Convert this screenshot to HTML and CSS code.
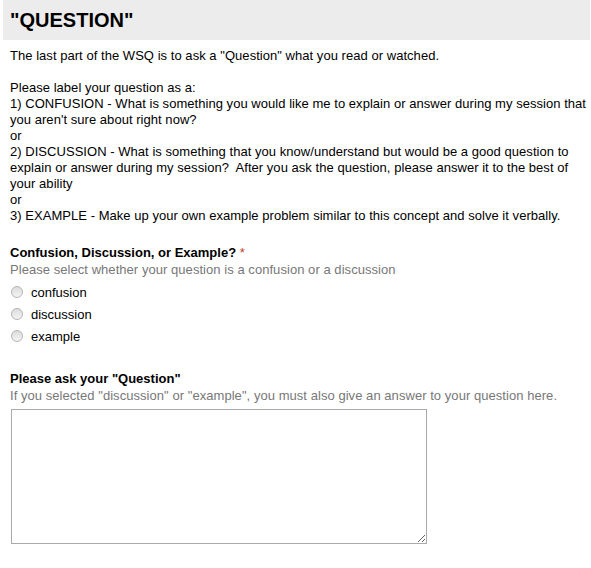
FILE: index.html
```html
<!DOCTYPE html>
<html>
<head>
<meta charset="utf-8">
<link rel="stylesheet" href="styles.css">
</head>
<body>
<div class="page">
  <div class="header"><h1 class="title">"QUESTION"</h1></div>
  <div class="content">
    <div class="desc">The last part of the WSQ is to ask a "Question" what you read or watched.<br><br>Please label your question as a:<br>1) CONFUSION - What is something you would like me to explain or answer during my session that you aren't sure about right now?<br>or<br>2) DISCUSSION - What is something that you know/understand but would be a good question to explain or answer during my session?&nbsp; After you ask the question, please answer it to the best of your ability<br>or<br>3) EXAMPLE - Make up your own example problem similar to this concept and solve it verbally.</div>

    <div class="item item-radio">
      <div class="label">Confusion, Discussion, or Example? <span class="req">*</span></div>
      <div class="help">Please select whether your question is a confusion or a discussion</div>
      <ul class="choices">
        <li class="choice"><label><input type="radio" name="q" class="radio"><span>confusion</span></label></li>
        <li class="choice"><label><input type="radio" name="q" class="radio"><span>discussion</span></label></li>
        <li class="choice"><label><input type="radio" name="q" class="radio"><span>example</span></label></li>
      </ul>
    </div>

    <div class="item item-text">
      <div class="label">Please ask your "Question"</div>
      <div class="help">If you selected "discussion" or "example", you must also give an answer to your question here.</div>
      <textarea class="answer"></textarea>
    </div>
  </div>
</div>
</body>
</html>
```
FILE: styles.css
```css
html, body {
  margin: 0;
  padding: 0;
  background: #fff;
}
body {
  font-family: "Liberation Sans", Arial, sans-serif;
  font-size: 13px;
  color: #000;
}
.page {
  padding: 0 1px 0 3px;
}
.header {
  background: #ececec;
  height: 40px;
  padding-left: 7px;
}
.title {
  margin: 0;
  font-size: 20px;
  font-weight: bold;
  line-height: 41px;
  color: #000;
}
.content {
  padding-left: 7px;
  padding-top: 8px;
}
.desc {
  line-height: 16px;
  letter-spacing: 0.04px;
}
.item-radio {
  margin-top: 21px;
}
.label {
  font-weight: bold;
  line-height: 16px;
  color: #000;
}
.req {
  color: #c43b1d;
  font-weight: normal;
}
.help {
  color: #777;
  line-height: 18px;
  margin-top: 0px;
  letter-spacing: 0.05px;
}
.choices {
  list-style: none;
  margin: 2px 0 0;
  padding: 0;
}
.choice {
  height: 22px;
  display: flex;
  align-items: center;
}
.choice label {
  display: flex;
  align-items: center;
}
.radio {
  appearance: none;
  -webkit-appearance: none;
  width: 12px;
  height: 12px;
  margin: 0 8px 0 1px;
  border: 1px solid #b4b4b4;
  border-radius: 50%;
  background: linear-gradient(#dcdcdc, #f4f4f4);
  box-sizing: border-box;
}
.item-text {
  margin-top: 24px;
}
.answer {
  display: block;
  margin: 4px 0 0 1px;
  width: 416px;
  height: 135px;
  box-sizing: border-box;
  border: 1px solid #aaa;
  padding: 2px;
  font-family: "Liberation Sans", Arial, sans-serif;
  font-size: 13px;
  resize: both;
}
```
